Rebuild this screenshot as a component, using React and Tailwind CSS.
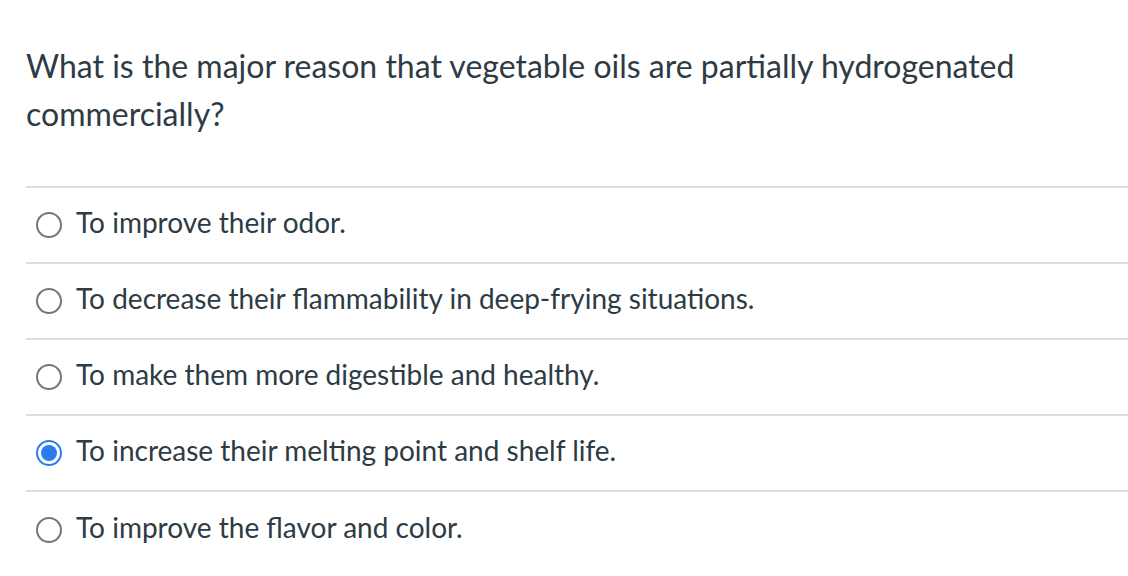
import React from 'react';

const options = [
  { id: 'a', text: 'To improve their odor.' },
  { id: 'b', text: 'To decrease their flammability in deep-frying situations.' },
  { id: 'c', text: 'To make them more digestible and healthy.' },
  { id: 'd', text: 'To increase their melting point and shelf life.', checked: true },
  { id: 'e', text: 'To improve the flavor and color.' },
];

function Radio({ checked }) {
  if (checked) {
    return (
      <span className="w-[26px] h-[26px] rounded-full border-2 border-[#2b7cf2] flex items-center justify-center shrink-0">
        <span className="w-[16px] h-[16px] rounded-full bg-[#2b7cf2]" />
      </span>
    );
  }
  return <span className="w-[26px] h-[26px] rounded-full border-2 border-[#767676] shrink-0" />;
}

export default function App() {
  return (
    <div className="bg-white min-h-screen text-[#2d3b45]" style={{ fontFamily: 'Lato, "Open Sans", sans-serif' }}>
      <div className="pl-[26px] pt-[42px]">
        <p className="text-[32px] leading-[48px] pr-[80px]">
          What is the major reason that vegetable oils are partially hydrogenated commercially?
        </p>
        <div className="mt-[48px] border-t-2 border-[#dcdcdc]">
          {options.map((o) => (
            <div key={o.id} className="h-[76px] flex items-center gap-[14px] pl-[10px] border-b-2 border-[#dcdcdc] last:border-b-0">
              <Radio checked={o.checked} />
              <span className="text-[28px] leading-[32px] -mt-[6px]">{o.text}</span>
            </div>
          ))}
        </div>
      </div>
    </div>
  );
}
